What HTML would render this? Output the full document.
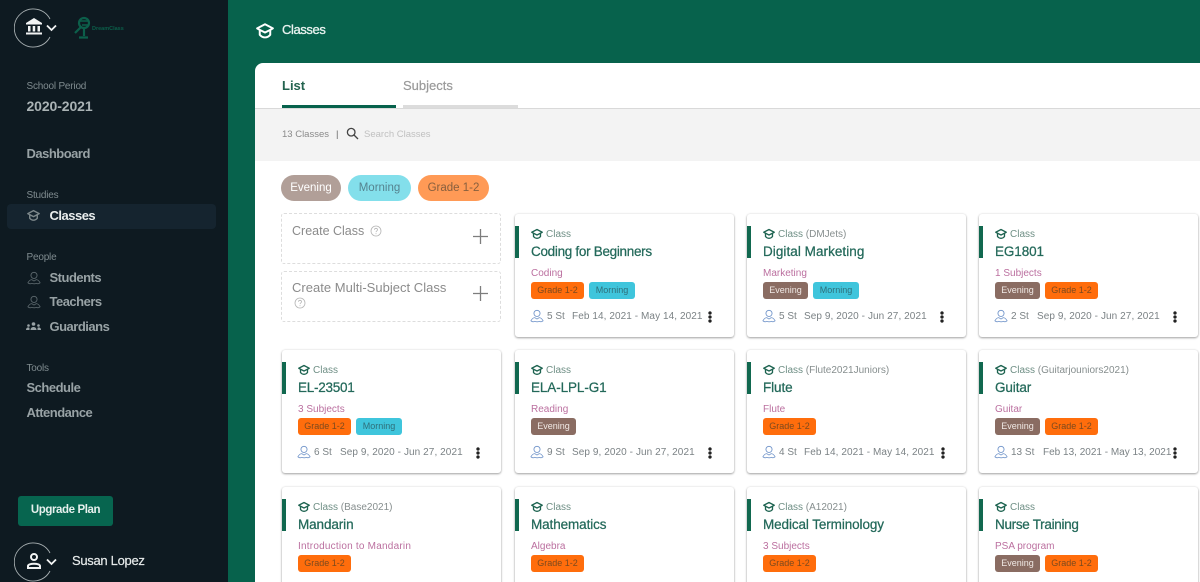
<!DOCTYPE html>
<html><head><meta charset="utf-8"><title>Classes</title>
<style>
*{box-sizing:border-box;margin:0;padding:0}
html,body{width:1200px;height:582px;overflow:hidden;background:#07624c;font-family:"Liberation Sans",sans-serif}
#root{position:relative;width:1200px;height:582px;overflow:hidden;background:#07624c}
.a{position:absolute;white-space:nowrap}
#side{position:absolute;left:0;top:0;width:228px;height:582px;background:#0e1a21}
.sl{position:absolute;left:26.5px;font-size:10px;line-height:14px;color:#7f8b8f;letter-spacing:-.2px;white-space:nowrap}
.si{position:absolute;font-size:13px;line-height:18px;font-weight:bold;color:#98a2a5;letter-spacing:-.5px;white-space:nowrap}
#main{position:absolute;left:255px;top:63px;width:945px;height:519px;background:#fff;border-radius:8px 0 0 0;overflow:hidden}
.c{position:absolute;width:219px;height:123px;background:#fff;border-radius:3px;box-shadow:0 1px 2px rgba(0,0,0,.35),0 0 2px rgba(0,0,0,.1)}
.c>*{position:absolute;white-space:nowrap}
.b{left:0;top:12px;width:4px;height:32px;background:#11684f}
.cp{left:16px;top:14px;width:12px;height:12px}
.k{left:31px;top:14px;font-size:10px;line-height:14px;color:#6f8f85}
.k span{color:#868e8e}
.t{left:16px;top:29px;font-size:13.5px;line-height:18px;color:#23695a;font-weight:normal;letter-spacing:-.1px;-webkit-text-stroke:.25px #23695a}
.s{left:16px;top:53px;font-size:10px;line-height:14px;color:#bb6f9f}
.h{left:16px;top:68px;display:flex;gap:5px}
.h i{display:block;height:17px;border-radius:3px;font-style:normal;font-size:9px;line-height:17px;text-align:center}
.g{width:53px;background:#ff6d0c;color:#7c4a1e}
.m{width:46px;background:#3fc5dc;color:#2f6f7a}
.e{width:45px;background:#8a6c62;color:#f0e8e4}
.p{left:15px;top:95px;width:14px;height:14px}
.n{left:32px;top:96px;font-size:10px;line-height:14px;color:#7b8285}
.d{left:57px;top:96px;font-size:10px;line-height:14px;color:#7b8285;letter-spacing:.08px}
.o{left:193px;top:97px;width:4px;height:12px;background:radial-gradient(circle at 2px 2px,#222 1.5px,transparent 1.9px),radial-gradient(circle at 2px 6px,#222 1.5px,transparent 1.9px),radial-gradient(circle at 2px 10px,#222 1.5px,transparent 1.9px)}
.dash{position:absolute;left:281px;width:220px;height:51px;border:1px dashed #ddd;border-radius:3px;background:#fff}
.pill{position:absolute;top:175px;height:26px;border-radius:13px;font-size:11.5px;line-height:26px;text-align:center}
</style></head><body>
<div id="root">
<svg width="0" height="0" style="position:absolute"><defs>
<symbol id="cap" viewBox="0 0 24 24"><path d="M12 3 1.500 8.500 5 10.500v6.500c2 2.600 4.400 3.600 7 3.600s5-1 7-3.600v-6.500l3.500-2z" fill="none" stroke="currentColor" stroke-width="2.600" stroke-linejoin="round"/><path d="M5 10.500 12 14l7-3.500" fill="none" stroke="currentColor" stroke-width="2.600"/></symbol>
<symbol id="usr" viewBox="0 0 16 16"><circle cx="8" cy="5" r="3.500" fill="none" stroke="currentColor" stroke-width="1"/><path d="M1 13.500c1.500-2.600 3.500-3.600 4.500-3.600L8 11.500l2.500-1.600c1 0 3 1 4.500 3.600-2 1.600-3.500 1-4 .6-.8.7-4.800.7-5.600 0-.6.4-2.400 1-4.400-.6z" fill="none" stroke="currentColor" stroke-width=".9"/></symbol>
<symbol id="help" viewBox="0 0 12 12"><circle cx="6" cy="6" r="5" fill="none" stroke="#b5b5b5" stroke-width=".8"/><path d="M4.500 4.800c0-2 3-2 3 0 0 1.200-1.500 1-1.500 2.300M6 8.300v.8" fill="none" stroke="#b5b5b5" stroke-width=".8"/></symbol>
</defs></svg>

<div id="side">
<svg class="a" style="left:14px;top:8px" width="40" height="40" viewBox="0 0 40 40"><path d="M36 11A19 19 0 1 0 36 29" fill="none" stroke="#a9b1b3" stroke-width=".9"/></svg>
<svg class="a" style="left:25px;top:17px" width="18" height="19" viewBox="0 0 18 19" fill="#f1f3f3"><path d="M9 1 1 6v1.500h16V6z"/><rect x="3" y="9" width="2.500" height="5.500"/><rect x="7.700" y="9" width="2.500" height="5.500"/><rect x="12.500" y="9" width="2.500" height="5.500"/><rect x="1" y="15.500" width="16" height="2"/></svg>
<svg class="a" style="left:46px;top:24px" width="11" height="8" viewBox="0 0 11 8"><path d="M1 1.500 5.500 6 10 1.500" fill="none" stroke="#f1f3f3" stroke-width="1.800"/></svg>
<svg class="a" style="left:73px;top:16px" width="20" height="24" viewBox="0 0 20 24" fill="none" stroke="#0c5f4a" stroke-width="2.200"><circle cx="11" cy="7" r="5"/><path d="M8 11 2 17M11 13v7M6 21.500h9"/><path d="M7 5h8M9 9h6" stroke-width="1.500"/></svg>
<div class="a" style="left:92px;top:25px;font-size:5.500px;line-height:8px;font-weight:bold;color:#0b5f4a">DreamClass</div>

<div class="sl" style="top:80px">School Period</div>
<div class="si" style="left:26.5px;top:97px;color:#aab3b5;font-size:14px;letter-spacing:-.1px">2020-2021</div>
<div class="si" style="left:26.5px;top:145px">Dashboard</div>
<div class="sl" style="top:189px">Studies</div>
<div class="a" style="left:7px;top:204px;width:209px;height:25px;background:#15242f;border-radius:4px"></div>
<svg class="a" style="left:27px;top:209px;color:#7d888b" width="13" height="13"><use href="#cap"/></svg>
<div class="si" style="left:49.500px;top:207px;color:#e9eded">Classes</div>
<div class="sl" style="top:251px">People</div>
<svg class="a" style="left:27px;top:271px;color:#5f6b70" width="14" height="14"><use href="#usr"/></svg>
<div class="si" style="left:49.500px;top:269px">Students</div>
<svg class="a" style="left:27px;top:295px;color:#5f6b70" width="14" height="14"><use href="#usr"/></svg>
<div class="si" style="left:49.500px;top:293px">Teachers</div>
<svg class="a" style="left:26px;top:322px" width="15" height="9" viewBox="0 0 15 9" fill="#98a2a5"><circle cx="7.500" cy="2" r="1.800"/><path d="M4.500 8c0-4 6-4 6 0z"/><circle cx="2.500" cy="3.500" r="1.300"/><path d="M0 8c0-3 3-3 3.500-2L3.500 8z"/><circle cx="12.500" cy="3.500" r="1.300"/><path d="M15 8c0-3-3-3-3.500-2v2z"/></svg>
<div class="si" style="left:49.500px;top:318px">Guardians</div>
<div class="sl" style="top:362px">Tools</div>
<div class="si" style="left:26.5px;top:379px">Schedule</div>
<div class="si" style="left:26.5px;top:404px">Attendance</div>
<div class="a" style="left:18px;top:496px;width:95px;height:30px;background:#07654f;border-radius:3px;font-size:11.500px;line-height:29px;font-weight:bold;color:#e6f0ed;text-align:center;letter-spacing:-.4px">Upgrade Plan</div>
<svg class="a" style="left:14px;top:542px" width="40" height="40" viewBox="0 0 40 40"><path d="M36 11A19 19 0 1 0 36 29" fill="none" stroke="#a9b1b3" stroke-width=".9"/></svg>
<svg class="a" style="left:26px;top:552px" width="16" height="18" viewBox="0 0 16 18" fill="none" stroke="#f1f3f3" stroke-width="2"><circle cx="8" cy="5" r="3"/><path d="M2 16v-2c0-3 12-3 12 0v2z"/></svg>
<svg class="a" style="left:46px;top:558px" width="11" height="8" viewBox="0 0 11 8"><path d="M1 1.500 5.500 6 10 1.500" fill="none" stroke="#f1f3f3" stroke-width="1.800"/></svg>
<div class="a" style="left:72px;top:552px;font-size:13px;line-height:18px;color:#e6eaea;-webkit-text-stroke:.2px #e6eaea;letter-spacing:-.3px">Susan Lopez</div>
</div>

<svg class="a" style="left:256px;top:22px;color:#fff" width="18" height="18"><use href="#cap"/></svg>
<div class="a" style="left:282px;top:21px;font-size:13px;line-height:18px;color:#eaf3f0;-webkit-text-stroke:.3px #eaf3f0;letter-spacing:-.4px">Classes</div>

<div id="main">
<div class="a" style="left:0;top:45px;width:945px;height:1px;background:#d9d9d9"></div>
<div class="a" style="left:27px;top:14px;font-size:13px;line-height:18px;font-weight:bold;color:#23634f">List</div>
<div class="a" style="left:148px;top:14px;font-size:13px;line-height:18px;color:#9a9a9a;-webkit-text-stroke:.2px #9a9a9a">Subjects</div>
<div class="a" style="left:27px;top:42px;width:114px;height:3px;background:#07624c"></div>
<div class="a" style="left:148px;top:42px;width:115px;height:3px;background:#dcdcdc"></div>
<div class="a" style="left:0;top:46px;width:945px;height:52px;background:#f3f3f3"></div>
<div class="a" style="left:27px;top:64px;font-size:9.500px;line-height:15px;color:#8a8a8a">13 Classes</div>
<div class="a" style="left:81px;top:64px;font-size:9.500px;line-height:15px;color:#666">|</div>
<svg class="a" style="left:91px;top:64px" width="13" height="13" viewBox="0 0 13 13" fill="none" stroke="#444" stroke-width="1.300"><circle cx="5.200" cy="5.200" r="3.800"/><path d="M8 8l4 4"/></svg>
<div class="a" style="left:109px;top:64px;font-size:9.500px;line-height:15px;color:#c0c0c0">Search Classes</div>
</div>

<div class="pill" style="left:281px;width:60px;background:#b19f98;color:#fff">Evening</div>
<div class="pill" style="left:348px;width:63px;background:#83dfeb;color:#55838f">Morning</div>
<div class="pill" style="left:418px;width:71px;background:#ff9a56;color:#875f3e">Grade 1-2</div>

<div class="dash" style="top:213px"></div>
<div class="a" style="left:292px;top:223px;font-size:12.500px;line-height:16px;color:#8b8b8b">Create Class</div>
<svg class="a" style="left:370px;top:225px" width="12" height="12"><use href="#help"/></svg>
<svg class="a" style="left:473px;top:229px" width="15" height="15"><path d="M7.500 0v15M0 7.500h15" stroke="#7d7d7d" stroke-width="1.300"/></svg>
<div class="dash" style="top:271px"></div>
<div class="a" style="left:292px;top:280px;font-size:13px;line-height:16px;color:#8b8b8b;letter-spacing:.02px">Create Multi-Subject Class</div>
<svg class="a" style="left:294px;top:297px" width="12" height="12"><use href="#help"/></svg>
<svg class="a" style="left:473px;top:286px" width="15" height="15"><path d="M7.500 0v15M0 7.500h15" stroke="#7d7d7d" stroke-width="1.300"/></svg>

<!-- Row 1 -->
<div class="c" style="left:515px;top:214px"><div class="b"></div><svg class="cp" style="color:#1d6350"><use href="#cap"/></svg><div class="k">Class</div><div class="t" style="letter-spacing:-.3px">Coding for Beginners</div><div class="s">Coding</div><div class="h"><i class="g">Grade 1-2</i><i class="m">Morning</i></div><svg class="p" style="color:#6f93c9"><use href="#usr"/></svg><div class="n">5 St</div><div class="d">Feb 14, 2021 - May 14, 2021</div><div class="o"></div></div>
<div class="c" style="left:747px;top:214px"><div class="b"></div><svg class="cp" style="color:#1d6350"><use href="#cap"/></svg><div class="k">Class <span>(DMJets)</span></div><div class="t" style="letter-spacing:.05px">Digital Marketing</div><div class="s">Marketing</div><div class="h"><i class="e">Evening</i><i class="m">Morning</i></div><svg class="p" style="color:#6f93c9"><use href="#usr"/></svg><div class="n">5 St</div><div class="d">Sep 9, 2020 - Jun 27, 2021</div><div class="o"></div></div>
<div class="c" style="left:979px;top:214px"><div class="b"></div><svg class="cp" style="color:#1d6350"><use href="#cap"/></svg><div class="k">Class</div><div class="t">EG1801</div><div class="s">1 Subjects</div><div class="h"><i class="e">Evening</i><i class="g">Grade 1-2</i></div><svg class="p" style="color:#6f93c9"><use href="#usr"/></svg><div class="n">2 St</div><div class="d" style="left:58px">Sep 9, 2020 - Jun 27, 2021</div><div class="o" style="left:194px"></div></div>
<!-- Row 2 -->
<div class="c" style="left:282px;top:350px"><div class="b"></div><svg class="cp" style="color:#1d6350"><use href="#cap"/></svg><div class="k">Class</div><div class="t" style="letter-spacing:-.25px">EL-23501</div><div class="s">3 Subjects</div><div class="h"><i class="g">Grade 1-2</i><i class="m">Morning</i></div><svg class="p" style="color:#6f93c9"><use href="#usr"/></svg><div class="n">6 St</div><div class="d" style="left:58px">Sep 9, 2020 - Jun 27, 2021</div><div class="o" style="left:194px"></div></div>
<div class="c" style="left:515px;top:350px"><div class="b"></div><svg class="cp" style="color:#1d6350"><use href="#cap"/></svg><div class="k">Class</div><div class="t">ELA-LPL-G1</div><div class="s">Reading</div><div class="h"><i class="e">Evening</i></div><svg class="p" style="color:#6f93c9"><use href="#usr"/></svg><div class="n">9 St</div><div class="d">Sep 9, 2020 - Jun 27, 2021</div><div class="o"></div></div>
<div class="c" style="left:747px;top:350px"><div class="b"></div><svg class="cp" style="color:#1d6350"><use href="#cap"/></svg><div class="k">Class <span>(Flute2021Juniors)</span></div><div class="t">Flute</div><div class="s">Flute</div><div class="h"><i class="g">Grade 1-2</i></div><svg class="p" style="color:#6f93c9"><use href="#usr"/></svg><div class="n">4 St</div><div class="d">Feb 14, 2021 - May 14, 2021</div><div class="o" style="left:194px"></div></div>
<div class="c" style="left:979px;top:350px"><div class="b"></div><svg class="cp" style="color:#1d6350"><use href="#cap"/></svg><div class="k">Class <span>(Guitarjouniors2021)</span></div><div class="t">Guitar</div><div class="s">Guitar</div><div class="h"><i class="e">Evening</i><i class="g">Grade 1-2</i></div><svg class="p" style="color:#6f93c9"><use href="#usr"/></svg><div class="n">13 St</div><div class="d" style="left:64px;letter-spacing:0">Feb 13, 2021 - May 13, 2021</div><div class="o" style="left:194px"></div></div>
<!-- Row 3 -->
<div class="c" style="left:282px;top:487px"><div class="b"></div><svg class="cp" style="color:#1d6350"><use href="#cap"/></svg><div class="k">Class <span>(Base2021)</span></div><div class="t">Mandarin</div><div class="s" style="letter-spacing:.22px">Introduction to Mandarin</div><div class="h"><i class="g">Grade 1-2</i></div></div>
<div class="c" style="left:515px;top:487px"><div class="b"></div><svg class="cp" style="color:#1d6350"><use href="#cap"/></svg><div class="k">Class</div><div class="t">Mathematics</div><div class="s">Algebra</div><div class="h"><i class="g">Grade 1-2</i></div></div>
<div class="c" style="left:747px;top:487px"><div class="b"></div><svg class="cp" style="color:#1d6350"><use href="#cap"/></svg><div class="k">Class <span>(A12021)</span></div><div class="t">Medical Terminology</div><div class="s">3 Subjects</div><div class="h"><i class="g">Grade 1-2</i></div></div>
<div class="c" style="left:979px;top:487px"><div class="b"></div><svg class="cp" style="color:#1d6350"><use href="#cap"/></svg><div class="k">Class</div><div class="t" style="letter-spacing:-.3px">Nurse Training</div><div class="s">PSA program</div><div class="h"><i class="e">Evening</i><i class="g">Grade 1-2</i></div></div>
</div>
</body></html>
